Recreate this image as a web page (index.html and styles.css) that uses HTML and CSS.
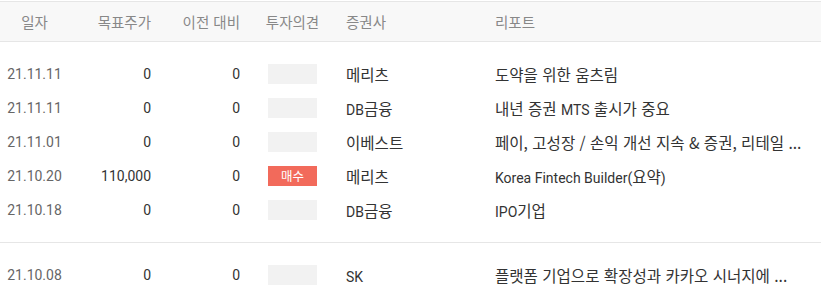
FILE: index.html
```html
<!DOCTYPE html>
<html lang="ko">
<head>
<meta charset="utf-8">
<link rel="stylesheet" href="styles.css">
</head>
<body>
<div class="report-table">
  <div class="row head">
    <div class="c-date">일자</div>
    <div class="c-num">목표주가</div>
    <div class="c-num">이전 대비</div>
    <div class="c-op">투자의견</div>
    <div class="c-firm">증권사</div>
    <div class="c-title">리포트</div>
  </div>
  <div class="group">
    <div class="row">
      <div class="c-date">21.11.11</div>
      <div class="c-num">0</div>
      <div class="c-num">0</div>
      <div class="c-op"><span class="op empty"></span></div>
      <div class="c-firm">메리츠</div>
      <div class="c-title">도약을 위한 움츠림</div>
    </div>
    <div class="row">
      <div class="c-date">21.11.11</div>
      <div class="c-num">0</div>
      <div class="c-num">0</div>
      <div class="c-op"><span class="op empty"></span></div>
      <div class="c-firm"><span class="lat">DB</span>금융</div>
      <div class="c-title">내년 증권 <span class="lat">MTS</span> 출시가 중요</div>
    </div>
    <div class="row">
      <div class="c-date">21.11.01</div>
      <div class="c-num">0</div>
      <div class="c-num">0</div>
      <div class="c-op"><span class="op empty"></span></div>
      <div class="c-firm">이베스트</div>
      <div class="c-title">페이, 고성장 / 손익 개선 지속 &amp; 증권, 리테일 ...</div>
    </div>
    <div class="row">
      <div class="c-date">21.10.20</div>
      <div class="c-num">110,000</div>
      <div class="c-num">0</div>
      <div class="c-op"><span class="op buy">매수</span></div>
      <div class="c-firm">메리츠</div>
      <div class="c-title"><span class="lat">Korea Fintech Builder(</span>요약<span class="lat">)</span></div>
    </div>
    <div class="row">
      <div class="c-date">21.10.18</div>
      <div class="c-num">0</div>
      <div class="c-num">0</div>
      <div class="c-op"><span class="op empty"></span></div>
      <div class="c-firm"><span class="lat">DB</span>금융</div>
      <div class="c-title"><span class="lat">IPO</span>기업</div>
    </div>
  </div>
  <div class="group second">
    <div class="row">
      <div class="c-date">21.10.08</div>
      <div class="c-num">0</div>
      <div class="c-num">0</div>
      <div class="c-op"><span class="op empty"></span></div>
      <div class="c-firm"><span class="lat">SK</span></div>
      <div class="c-title">플랫폼 기업으로 확장성과 카카오 시너지에 ...</div>
    </div>
  </div>
</div>
</body>
</html>
```
FILE: styles.css
```css
html, body {
  margin: 0;
  padding: 0;
  background: #fff;
}
body {
  font-family: Roboto, "Noto Sans CJK KR", sans-serif;
  font-size: 14px;
  color: #333;
}
.report-table {
  padding-top: 1px;
  width: 821px;
}
.row {
  display: grid;
  grid-template-columns: 69px 82px 89px 105px 150px 1fr;
  align-items: center;
  height: 34px;
  white-space: nowrap;
}
.row.head {
  height: 39px;
  background: #f8f8f8;
  border-top: 1px solid #e6e6e6;
  border-bottom: 1px solid #e6e6e6;
  color: #888;
  font-family: "Noto Sans CJK KR", sans-serif;
  font-size: 14.5px;
}
.group {
  padding: 15px 0 15px;
}
.group + .group {
  border-top: 1px solid #e6e6e6;
}
.group:first-of-type {
  padding-top: 16px;
}
.c-date {
  text-align: center;
  color: #666;
}
.head .c-date { color: #888; }
.c-num {
  text-align: right;
}
.c-op {
  display: flex;
  justify-content: center;
}
.c-firm,
.c-title {
  font-family: "Noto Sans CJK KR", sans-serif;
  font-size: 15.55px;
}
.head .c-firm,
.head .c-title {
  font-size: 14.5px;
}
.lat {
  font-family: Roboto, sans-serif;
  font-size: 14px;
}
.c-firm {
  padding-left: 1px;
}
.op {
  display: inline-block;
  width: 49px;
  height: 20px;
  line-height: 20px;
  text-align: center;
  font-family: "Noto Sans CJK KR", sans-serif;
  font-size: 12.5px;
}
.op.empty {
  background: #f2f2f2;
}
.op.buy {
  background: #f26a5b;
  color: #fff;
}
.c-title {
  overflow: hidden;
}
```
